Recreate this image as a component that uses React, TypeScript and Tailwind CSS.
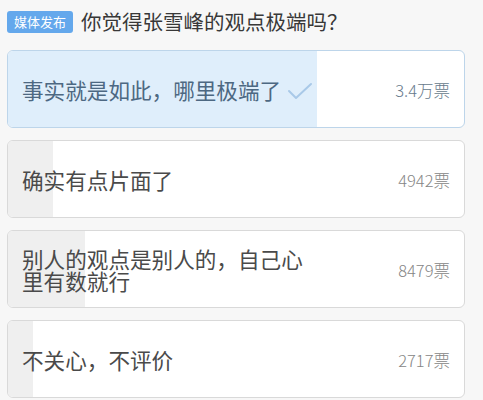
import React from "react";

const options = [
  { text: "事实就是如此，哪里极端了", votes: 34000, label: "3.4万票", selected: true },
  { text: "确实有点片面了", votes: 4942, label: "4942票", selected: false },
  { text: "别人的观点是别人的，自己心里有数就行", votes: 8479, label: "8479票", selected: false },
  { text: "不关心，不评价", votes: 2717, label: "2717票", selected: false },
];

const total = options.reduce((s, o) => s + o.votes, 0);

export default function App() {
  return (
    <div
      className="w-[483px] h-[400px] overflow-hidden bg-[#f7f7f7]"
      style={{ fontFamily: '"Noto Sans CJK SC", "Noto Sans", sans-serif' }}
    >
      <div className="flex items-center h-[43px] pl-[7px]">
        <span className="flex items-center justify-center h-[22px] px-[7px] rounded-[3px] bg-[#64a8ec] text-white text-[13px] leading-none">
          媒体发布
        </span>
        <span className="ml-[8px] text-[20.5px] text-[#383838] leading-none">
          你觉得张雪峰的观点极端吗？
        </span>
      </div>
      <div className="flex flex-col gap-[12px] pl-[7px] pr-[18px] pt-[7px]">
        {options.map((o, i) => (
          <div
            key={i}
            className={
              "relative flex items-center h-[78px] rounded-[6px] border overflow-hidden bg-white " +
              (o.selected ? "border-[#bdd5ea]" : "border-[#d9d9d9]")
            }
          >
            <div
              className={"absolute left-0 top-0 bottom-0 " + (o.selected ? "bg-[#dfeefb]" : "bg-[#efefef]")}
              style={{ width: `${(o.votes / total) * 100}%` }}
            />
            <div className="relative flex flex-1 items-center justify-between pl-[14px] pr-[14px] pt-[2px]">
              <div className="flex items-center">
                <span
                  className={
                    "w-fit max-w-[292px] text-[21.6px] leading-[22px] " +
                    (o.selected ? "text-[#4d6882]" : "text-[#4a4a4a]")
                  }
                >
                  {o.text}
                </span>
                {o.selected && (
                  <svg width="26" height="18" viewBox="0 0 26 18" className="ml-[6px] mt-[2px]">
                    <path d="M2 9 L9 16 L24 2" fill="none" stroke="#a9c9e8" strokeWidth="2" strokeLinecap="round" strokeLinejoin="round" />
                  </svg>
                )}
              </div>
              <span className={"text-[16.5px] font-light " + (o.selected ? "text-[#66798b]" : "text-[#858585]")}>
                {o.label}
              </span>
            </div>
          </div>
        ))}
      </div>
    </div>
  );
}
